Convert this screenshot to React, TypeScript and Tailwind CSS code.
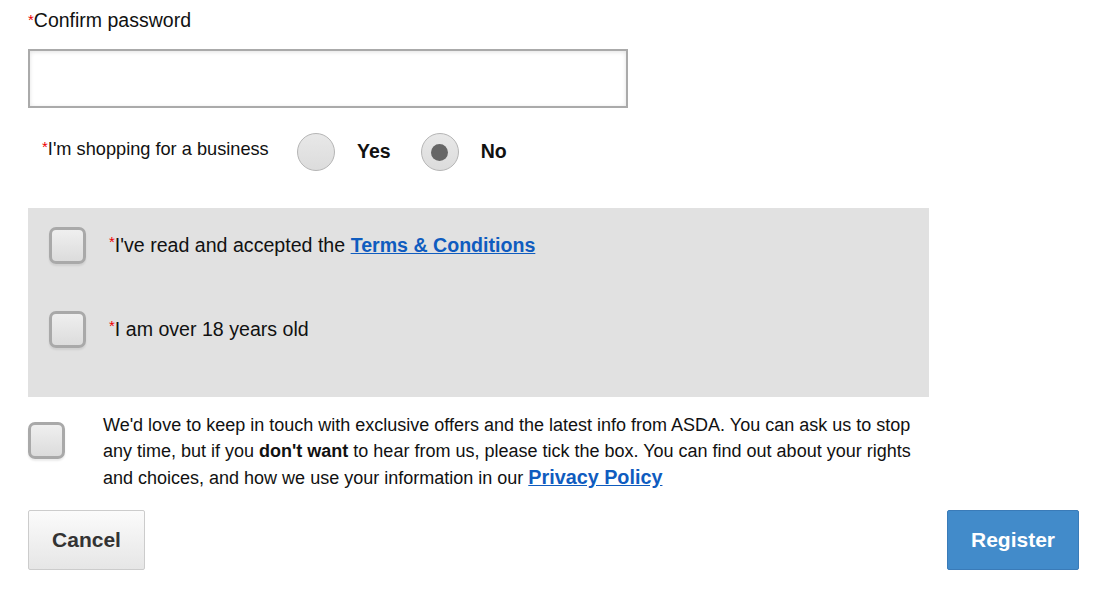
import { useState } from "react";

function Req() {
  return <span className="text-[#e00] text-[15px] align-top">*</span>;
}

function Box({ checked, onClick }: { checked: boolean; onClick: () => void }) {
  return (
    <button
      onClick={onClick}
      className="w-[37px] h-[37px] shrink-0 rounded-[7px] border-[3px] border-[#a9a9a9] bg-gradient-to-b from-[#efefef] to-[#dcdcdc] shadow-[0_2px_2px_rgba(0,0,0,0.08)] flex items-center justify-center"
    >
      {checked && <span className="text-[#555] text-[20px] leading-none">✓</span>}
    </button>
  );
}

function Radio({ label, checked, onClick }: { label: string; checked: boolean; onClick: () => void }) {
  return (
    <button onClick={onClick} className="flex items-center">
      <span className="w-[38px] h-[38px] rounded-full border border-[#b5b5b5] bg-gradient-to-b from-[#e8e8e8] to-[#dcdcdc] flex items-center justify-center">
        {checked && <span className="w-[17px] h-[17px] rounded-full bg-[#666]" />}
      </span>
      <span className="ml-[22px] text-[19.5px] font-bold text-[#111]">{label}</span>
    </button>
  );
}

export default function App() {
  const [business, setBusiness] = useState(false);
  const [terms, setTerms] = useState(false);
  const [adult, setAdult] = useState(false);
  const [optOut, setOptOut] = useState(false);

  return (
    <div className="w-full min-h-[602px] bg-white pt-[8px] pl-[28px] pr-[25px] font-['Liberation_Sans',Arial,sans-serif] text-[#111]">
      <div className="h-6 leading-6 text-[19.5px]">
        <Req />Confirm password
      </div>
      <input
        type="password"
        className="mt-[17px] block w-[600px] h-[59px] border-2 border-[#aaa] shadow-[inset_0_1px_4px_rgba(0,0,0,0.12)] outline-none px-3"
      />

      <div className="mt-[25px] flex items-center h-[38px]">
        <div className="pl-[14px] w-[269px] text-[18.2px] -mt-[4px]">
          <Req />I'm shopping for a business
        </div>
        <Radio label="Yes" checked={business} onClick={() => setBusiness(true)} />
        <div className="ml-[30px]">
          <Radio label="No" checked={!business} onClick={() => setBusiness(false)} />
        </div>
      </div>

      <div className="mt-[37px] w-[901px] h-[189px] bg-[#e1e1e1] pt-[19px] pl-[21px] flex flex-col gap-[47px]">
        <div className="flex items-center gap-[23px]">
          <Box checked={terms} onClick={() => setTerms(!terms)} />
          <span className="text-[19.6px]">
            <Req />I've read and accepted the{" "}
            <a href="#" className="font-bold text-[#0f5cbf] underline">
              Terms &amp; Conditions
            </a>
          </span>
        </div>
        <div className="flex items-center gap-[23px]">
          <Box checked={adult} onClick={() => setAdult(!adult)} />
          <span className="text-[19.6px]">
            <Req />I am over 18 years old
          </span>
        </div>
      </div>

      <div className="mt-[15px] flex items-start">
        <div className="mt-[10px]">
          <Box checked={optOut} onClick={() => setOptOut(!optOut)} />
        </div>
        <p className="ml-[38px] w-[830px] text-[18px] leading-[26px] whitespace-nowrap">
          We'd love to keep in touch with exclusive offers and the latest info from ASDA. You can ask us to stop
          <br />
          any time, but if you <b>don't want</b> to hear from us, please tick the box. You can find out about your rights
          <br />
          and choices, and how we use your information in our{" "}
          <a href="#" className="font-bold text-[19.8px] text-[#0f5cbf] underline">
            Privacy Policy
          </a>
        </p>
      </div>

      <div className="mt-[19px] flex justify-between">
        <button className="w-[117px] h-[60px] rounded-[2px] border border-[#ccc] bg-gradient-to-b from-[#fbfbfb] to-[#e6e6e6] text-[21px] font-bold text-[#333]">
          Cancel
        </button>
        <button className="w-[132px] h-[60px] rounded-[2px] border border-[#3a7bb8] bg-[#428bca] text-[21px] font-bold text-white">
          Register
        </button>
      </div>
    </div>
  );
}
